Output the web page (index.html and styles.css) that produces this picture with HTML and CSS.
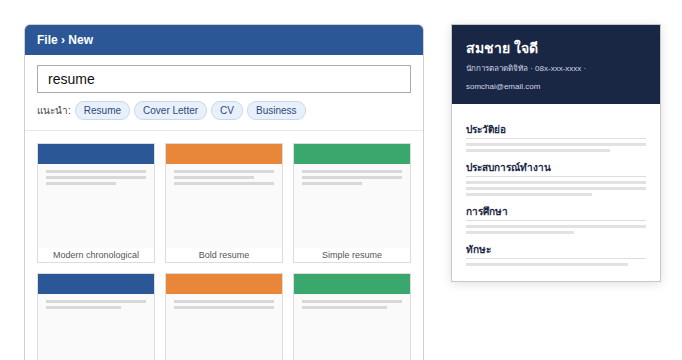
FILE: index.html
```html
<!DOCTYPE html>
<html lang="th">
<head>
    <meta charset="UTF-8">
    <meta name="viewport" content="width=device-width, initial-scale=1.0">
    <title>File &gt; New</title>
    <link rel="stylesheet" href="styles.css">
</head>
<body>
    <div class="page">
        <div class="new-panel">
            <div class="panel-header">File &rsaquo; New</div>
            <div class="search-area">
                <input type="text" class="search-box" value="resume">
                <div class="suggest">
                    <span class="suggest-label">แนะนำ:</span>
                    <span class="chip">Resume</span>
                    <span class="chip">Cover Letter</span>
                    <span class="chip">CV</span>
                    <span class="chip">Business</span>
                </div>
            </div>
            <div class="template-grid">
                <div class="template">
                    <div class="thumb">
                        <div class="band blue"></div>
                        <div class="thumb-body">
                            <div class="bar"></div>
                            <div class="bar"></div>
                            <div class="bar" style="width: 70%"></div>
                        </div>
                    </div>
                    <div class="template-name">Modern chronological</div>
                </div>
                <div class="template">
                    <div class="thumb">
                        <div class="band orange"></div>
                        <div class="thumb-body">
                            <div class="bar"></div>
                            <div class="bar" style="width: 80%"></div>
                            <div class="bar"></div>
                        </div>
                    </div>
                    <div class="template-name">Bold resume</div>
                </div>
                <div class="template">
                    <div class="thumb">
                        <div class="band green"></div>
                        <div class="thumb-body">
                            <div class="bar"></div>
                            <div class="bar"></div>
                            <div class="bar" style="width: 60%"></div>
                        </div>
                    </div>
                    <div class="template-name">Simple resume</div>
                </div>
                <div class="template">
                    <div class="thumb">
                        <div class="band blue"></div>
                        <div class="thumb-body">
                            <div class="bar"></div>
                            <div class="bar" style="width: 75%"></div>
                        </div>
                    </div>
                </div>
                <div class="template">
                    <div class="thumb">
                        <div class="band orange"></div>
                        <div class="thumb-body">
                            <div class="bar"></div>
                            <div class="bar"></div>
                        </div>
                    </div>
                </div>
                <div class="template">
                    <div class="thumb">
                        <div class="band green"></div>
                        <div class="thumb-body">
                            <div class="bar"></div>
                            <div class="bar" style="width: 85%"></div>
                        </div>
                    </div>
                </div>
            </div>
        </div>

        <div class="preview">
            <div class="preview-header">
                <div class="person-name">สมชาย ใจดี</div>
                <div class="person-info">นักการตลาดดิจิทัล · 08x-xxx-xxxx · somchai@email.com</div>
            </div>
            <div class="preview-body">
                <div class="section">
                    <div class="section-title">ประวัติย่อ</div>
                    <div class="line"></div>
                    <div class="line" style="width: 80%"></div>
                </div>
                <div class="section">
                    <div class="section-title">ประสบการณ์ทำงาน</div>
                    <div class="line"></div>
                    <div class="line"></div>
                    <div class="line" style="width: 70%"></div>
                </div>
                <div class="section">
                    <div class="section-title">การศึกษา</div>
                    <div class="line"></div>
                    <div class="line" style="width: 60%"></div>
                </div>
                <div class="section">
                    <div class="section-title">ทักษะ</div>
                    <div class="line" style="width: 90%"></div>
                </div>
            </div>
        </div>
    </div>
</body>
</html>
```

FILE: styles.css
```css
body {
    margin: 0;
    background: #fff;
    font-family: "Liberation Sans", Arial, sans-serif;
    color: #333;
    height: 360px;
    overflow: hidden;
}
.page {
    display: flex;
    align-items: flex-start;
    gap: 27px;
    padding: 24px 24px 0;
}
.new-panel {
    width: 400px;
    flex-shrink: 0;
    border: 1px solid #d0d0d0;
    border-radius: 6px;
    overflow: hidden;
    box-sizing: border-box;
}
.panel-header {
    background-color: #2b5797;
    color: white;
    font-weight: bold;
    font-size: 12px;
    height: 30px;
    line-height: 31px;
    padding: 0 12px;
}
.search-area {
    padding: 10px 12px 10px;
    border-bottom: 1px solid #e6e6e6;
}
.search-box {
    display: block;
    width: 100%;
    height: 28px;
    box-sizing: border-box;
    border: 1px solid #aaa;
    padding: 0 10px;
    font-family: inherit;
    font-size: 14px;
    color: #111;
    outline: none;
}
.suggest {
    display: flex;
    align-items: center;
    gap: 4px;
    margin-top: 8px;
}
.suggest-label {
    font-size: 10px;
    color: #444;
}
.chip {
    font-size: 10px;
    line-height: 17px;
    padding: 0 8px;
    border: 1px solid #c9d8ee;
    border-radius: 9px;
    background-color: #e8f0fb;
    color: #2b4a7a;
}
.template-grid {
    display: grid;
    grid-template-columns: repeat(3, 118px);
    gap: 10px;
    padding: 12px 12px 0;
}
.template {
    border: 1px solid #dcdcdc;
}
.thumb {
    background-color: #fafafa;
    height: 104px;
}
.band {
    height: 20px;
}
.band.blue {
    background-color: #2b5797;
}
.band.orange {
    background-color: #e8873a;
}
.band.green {
    background-color: #3aa76d;
}
.thumb-body {
    padding: 6px 8px;
}
.bar {
    height: 3px;
    background-color: #d8d8d8;
    margin-bottom: 3px;
}
.template-name {
    font-size: 9px;
    text-align: center;
    color: #555;
    height: 14px;
    line-height: 14px;
}
.preview {
    width: 208px;
    flex-shrink: 0;
    border: 1px solid #c8c8c8;
    box-shadow: 0 2px 10px rgba(0, 0, 0, 0.12);
    background: #fff;
}
.preview-header {
    background-color: #1a2744;
    color: white;
    height: 79px;
    padding: 14px 14px 0;
    box-sizing: border-box;
}
.person-name {
    font-size: 14px;
    font-weight: bold;
    line-height: 18px;
}
.person-info {
    font-size: 8px;
    line-height: 18px;
    color: #d0d6e4;
    margin-top: 3px;
}
.preview-body {
    padding: 20px 14px 15px;
}
.section {
    margin-bottom: 10px;
}
.section:last-child {
    margin-bottom: 0;
}
.section-title {
    font-size: 10px;
    font-weight: bold;
    color: #1a2744;
    line-height: 12px;
    padding-bottom: 2px;
    border-bottom: 1px solid #ddd;
    margin-bottom: 4px;
}
.line {
    height: 3px;
    background-color: #e2e2e2;
    margin-bottom: 3px;
}
.line:last-child {
    margin-bottom: 0;
}
```
